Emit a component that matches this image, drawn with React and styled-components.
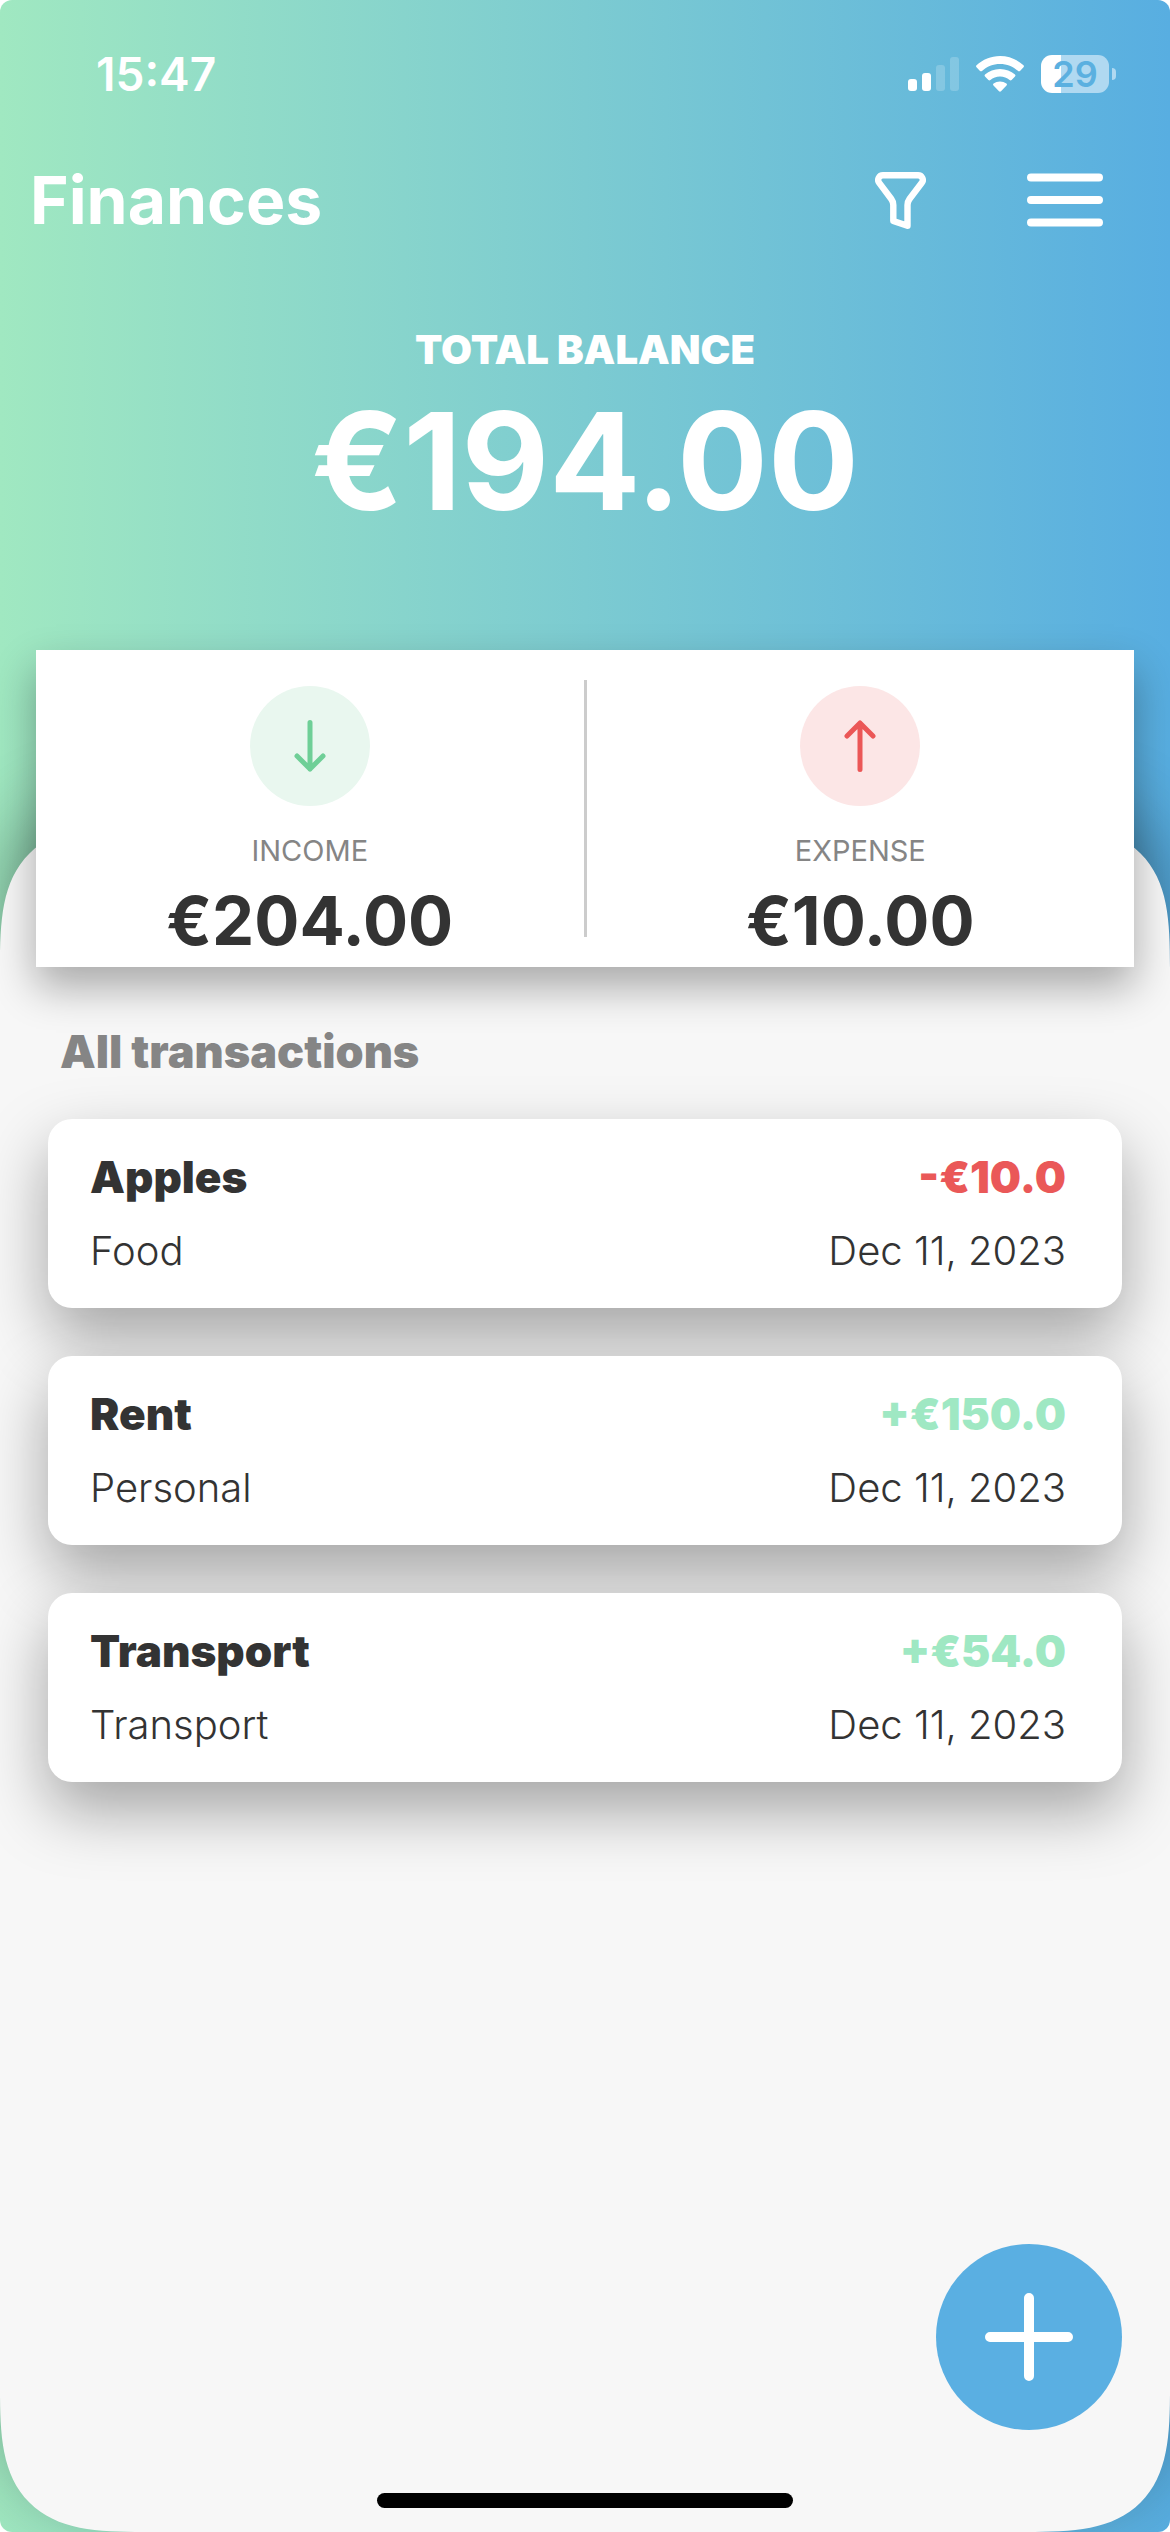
import React from 'react'
import styled, { createGlobalStyle } from 'styled-components'

const GlobalStyle = createGlobalStyle`
  * {
    box-sizing: border-box;
  }
  body {
    margin: 0;
    background: #fff;
    font-family: Inter, "Open Sans", sans-serif;
    color: #333;
  }
  h1, h2, h3, p, ul {
    margin: 0;
    padding: 0;
  }
  button {
    padding: 0;
    border: none;
    background: none;
    cursor: pointer;
  }
  svg {
    display: block;
  }
`

const Screen = styled.main`
  display: flex;
  flex-direction: column;
  min-height: 100vh;
  overflow: hidden;
  border-radius: 12px;
  background: linear-gradient(90deg, #a0e8c1, #58aee1);
`

const StatusBar = styled.div`
  display: flex;
  justify-content: space-between;
  align-items: center;
  height: 148px;
  padding: 0 54px 0 96px;
  color: #fff;
`

const Clock = styled.time`
  font-size: 46px;
  line-height: 56px;
  font-weight: 600;
`

const StatusIcons = styled.div`
  display: flex;
  align-items: center;
  gap: 17px;
`

const Battery = styled.div`
  display: flex;
  align-items: center;
  gap: 3px;
`

const BatteryBody = styled.div`
  width: 68px;
  height: 38px;
  border-radius: 11px;
  background: linear-gradient(90deg, #fff 30%, #b0d9f1 30%);
  color: #5bb0e0;
  font-size: 36px;
  line-height: 38px;
  font-weight: 600;
  text-align: center;
`

const BatteryTip = styled.div`
  width: 4px;
  height: 12px;
  border-radius: 0 4px 4px 0;
  background: #b0d9f1;
`

const TopBar = styled.header`
  display: flex;
  justify-content: space-between;
  align-items: center;
  height: 104px;
  padding: 0 67px 0 30px;
  color: #fff;
`

const Title = styled.h1`
  font-size: 66px;
  line-height: 80px;
  font-weight: 700;
`

const Actions = styled.nav`
  display: flex;
  align-items: center;
  gap: 101px;
`

const IconButton = styled.button`
  color: #fff;
`

const Balance = styled.section`
  display: flex;
  flex-direction: column;
  align-items: center;
  padding-top: 72px;
  height: 398px;
  color: #fff;
`

const BalanceLabel = styled.h2`
  font-size: 40px;
  line-height: 52px;
  font-weight: 900;
  text-transform: uppercase;
`

const BalanceAmount = styled.p`
  font-size: 135px;
  line-height: 170px;
  font-weight: 700;
`

const Sheet = styled.section`
  flex: 1;
  display: flex;
  flex-direction: column;
  margin-top: 174px;
  padding: 0 48px;
  border-radius: 100px;
  background: #f7f7f7;
  box-shadow: 0 -24px 72px rgba(0, 0, 0, 0.32);
  @supports (corner-shape: superellipse(1.6)) {
    border-radius: 144px;
    corner-shape: superellipse(1.6);
  }
`

const Summary = styled.div`
  display: flex;
  margin: -174px -12px 0;
  padding: 30px 0;
  height: 317px;
  background: #fff;
  box-shadow: 0 20px 40px rgba(0, 0, 0, 0.32);
`

const SummaryItem = styled.div`
  flex: 1;
  display: flex;
  flex-direction: column;
  align-items: center;
  padding-top: 6px;
  & + & {
    border-left: 3px solid #ccc;
  }
`

const Bubble = styled.div`
  flex: none;
  display: grid;
  place-items: center;
  width: 120px;
  height: 120px;
  border-radius: 50%;
  color: ${(p) => p.$color};
  background: ${(p) => p.$tint};
`

const SummaryLabel = styled.h3`
  margin-top: 27px;
  font-size: 29px;
  line-height: 36px;
  font-weight: 400;
  text-transform: uppercase;
  color: #858585;
`

const SummaryAmount = styled.p`
  margin-top: 12px;
  font-size: 67px;
  line-height: 80px;
  font-weight: 700;
`

const SectionTitle = styled.h2`
  margin: 57px 12px 0;
  font-size: 45px;
  line-height: 56px;
  font-weight: 900;
  color: #858585;
`

const List = styled.ul`
  display: flex;
  flex-direction: column;
  gap: 48px;
  margin-top: 39px;
  list-style: none;
`

const Transaction = styled.li`
  display: flex;
  flex-direction: column;
  justify-content: center;
  gap: 22px;
  height: 189px;
  padding: 0 56px 0 42px;
  border-radius: 24px;
  background: #fff;
  box-shadow: 0 28px 64px rgba(0, 0, 0, 0.34);
`

const Row = styled.div`
  display: flex;
  justify-content: space-between;
  font-size: 40px;
  line-height: 52px;
  font-weight: 300;
`

const Name = styled.h3`
  font-size: 44px;
  font-weight: 900;
`

const Amount = styled.span`
  font-size: 44px;
  font-weight: 900;
  color: ${(p) => (p.$income ? '#9fe8c3' : '#ea5858')};
`

const Footer = styled.footer`
  display: flex;
  flex-direction: column;
  margin-top: auto;
  padding-bottom: 24px;
`

const AddButton = styled.button`
  align-self: flex-end;
  display: grid;
  place-items: center;
  width: 186px;
  height: 186px;
  border-radius: 50%;
  background: #5aafe2;
  color: #fff;
`

const HomeIndicator = styled.div`
  align-self: center;
  width: 416px;
  height: 15px;
  margin-top: 63px;
  border-radius: 8px;
  background: #000;
`

const transactions = [
  { name: 'Apples', category: 'Food', amount: '-€10.0', date: 'Dec 11, 2023' },
  { name: 'Rent', category: 'Personal', amount: '+€150.0', date: 'Dec 11, 2023', income: true },
  { name: 'Transport', category: 'Transport', amount: '+€54.0', date: 'Dec 11, 2023', income: true },
]

const SignalIcon = () => (
  <svg width="51" height="34" viewBox="0 0 51 34" fill="#fff" aria-hidden="true">
    <rect x="0" y="22" width="9" height="12" rx="3" />
    <rect x="14" y="16" width="9" height="18" rx="3" />
    <rect x="28" y="8" width="9" height="26" rx="3" opacity="0.2" />
    <rect x="42" y="0" width="9" height="34" rx="3" opacity="0.2" />
  </svg>
)

const WifiIcon = () => (
  <svg width="48" height="36" viewBox="0 0 48 36" fill="#fff" aria-hidden="true">
    <path d="M24 0C33 0 41.300 3.500 47.500 9.300Q48.400 10.300 47.500 11.300L44 14.900Q43 15.800 42 14.900C37.200 10.500 30.900 7.900 24 7.900S10.800 10.500 6 14.900Q5 15.800 4 14.900L.5 11.300Q-.4 10.300 .5 9.300C6.700 3.500 15 0 24 0Z" />
    <path d="M24 12.900C29.800 12.900 35 15.100 39 18.600Q40 19.600 39 20.600L35.600 24Q34.600 24.900 33.600 24C31 21.900 27.700 20.600 24 20.600S17 21.900 14.400 24Q13.400 24.900 12.400 24L9 20.600Q8 19.600 9 18.600C13 15.100 18.200 12.900 24 12.900Z" />
    <path d="M24 25.500C26.400 25.500 28.600 26.300 30.400 27.600Q31.500 28.500 30.500 29.500L25 35.200Q24 36.100 23 35.200L17.500 29.500Q16.500 28.500 17.600 27.600C19.400 26.300 21.600 25.500 24 25.500Z" />
  </svg>
)

const FilterIcon = () => (
  <svg width="51" height="57" viewBox="0 0 51 57" fill="none" stroke="currentColor" strokeWidth="6.400" strokeLinejoin="round" aria-hidden="true">
    <path d="M8 3.200H43C47 3.200 49.200 7.700 46.800 10.800L34.500 27Q32.500 29.700 32.500 33V53.800L18.300 48.900V33Q18.300 29.700 16.300 27L4.200 10.800C1.800 7.700 4 3.200 8 3.200Z" />
  </svg>
)

const MenuIcon = () => (
  <svg width="76" height="54" viewBox="0 0 76 54" stroke="currentColor" strokeWidth="8" strokeLinecap="round" aria-hidden="true">
    <path d="M4 4.500H72M4 27H72M4 49.500H72" />
  </svg>
)

const ArrowIcon = ({ up }) => (
  <svg width="32" height="52" viewBox="0 0 32 52" fill="none" stroke="currentColor" strokeWidth="5" strokeLinecap="round" strokeLinejoin="round" aria-hidden="true">
    <path d={up ? 'M16 49.500V3M3 16L16 3L29 16' : 'M16 2.500V49M3 36L16 49L29 36'} />
  </svg>
)

const PlusIcon = () => (
  <svg width="88" height="88" viewBox="0 0 88 88" stroke="currentColor" strokeWidth="10" strokeLinecap="round" aria-hidden="true">
    <path d="M44 5V83M5 44H83" />
  </svg>
)

const App = () => {
  return (
    <Screen>
      <GlobalStyle />
      <StatusBar>
        <Clock>15:47</Clock>
        <StatusIcons>
          <SignalIcon />
          <WifiIcon />
          <Battery>
            <BatteryBody>29</BatteryBody>
            <BatteryTip />
          </Battery>
        </StatusIcons>
      </StatusBar>
      <TopBar>
        <Title>Finances</Title>
        <Actions>
          <IconButton aria-label="Filter"><FilterIcon /></IconButton>
          <IconButton aria-label="Menu"><MenuIcon /></IconButton>
        </Actions>
      </TopBar>
      <Balance>
        <BalanceLabel>Total balance</BalanceLabel>
        <BalanceAmount>€194.00</BalanceAmount>
      </Balance>
      <Sheet>
        <Summary>
          <SummaryItem>
            <Bubble $color="#6fcf97" $tint="#e9f7ef"><ArrowIcon /></Bubble>
            <SummaryLabel>Income</SummaryLabel>
            <SummaryAmount>€204.00</SummaryAmount>
          </SummaryItem>
          <SummaryItem>
            <Bubble $color="#eb5757" $tint="#fce6e6"><ArrowIcon up /></Bubble>
            <SummaryLabel>Expense</SummaryLabel>
            <SummaryAmount>€10.00</SummaryAmount>
          </SummaryItem>
        </Summary>
        <SectionTitle>All transactions</SectionTitle>
        <List>
          {transactions.map((item) => (
            <Transaction key={item.name}>
              <Row>
                <Name>{item.name}</Name>
                <Amount $income={item.income}>{item.amount}</Amount>
              </Row>
              <Row>
                <span>{item.category}</span>
                <time>{item.date}</time>
              </Row>
            </Transaction>
          ))}
        </List>
        <Footer>
          <AddButton aria-label="Add transaction"><PlusIcon /></AddButton>
          <HomeIndicator />
        </Footer>
      </Sheet>
    </Screen>
  )
}

export default App
